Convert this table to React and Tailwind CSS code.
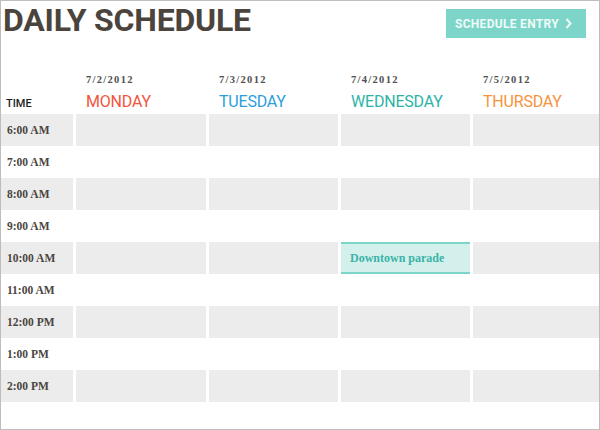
import React from 'react';

const days = [
  { date: '7/2/2012', name: 'MONDAY', color: 'text-[#f2553d]' },
  { date: '7/3/2012', name: 'TUESDAY', color: 'text-[#2b9edb]' },
  { date: '7/4/2012', name: 'WEDNESDAY', color: 'text-[#2db3a6]' },
  { date: '7/5/2012', name: 'THURSDAY', color: 'text-[#f7933c]' },
];

const times = ['6:00 AM', '7:00 AM', '8:00 AM', '9:00 AM', '10:00 AM', '11:00 AM', '12:00 PM', '1:00 PM', '2:00 PM'];

const serif = "font-['Liberation_Serif',serif]";
const sans = "font-['Roboto',sans-serif]";

const App = () => {
  return (
    <div className="w-[600px] h-[430px] border border-[#bdbdbd] bg-white overflow-hidden">
      {/* Title bar */}
      <div className="flex justify-between items-start h-[61px]">
        <h1 className={`${sans} font-bold text-[32px] leading-none tracking-[-0.2px] text-[#4b443c] pl-[2px] pt-[3px]`}>
          DAILY SCHEDULE
        </h1>
        <button className={`${sans} mt-[8px] mr-[13px] w-[140px] h-[29px] bg-[#7dd5ca] flex items-center pl-[9px] pr-[14px]`}>
          <span className="text-[12px] font-bold tracking-[0.3px] text-[#effaf8] whitespace-nowrap">SCHEDULE ENTRY</span>
          <svg className="ml-auto shrink-0" width="7" height="11" viewBox="0 0 7 11" fill="none">
            <path d="M1.5 1 L5.5 5.5 L1.5 10" stroke="#effaf8" strokeWidth="2" />
          </svg>
        </button>
      </div>

      {/* Column headings */}
      <div className="grid grid-cols-[72px_130px_129px_129px_1fr] gap-x-[3px] h-[52px]">
        <div className={`${sans} self-end pl-[5px] pb-[5px] text-[11px] leading-none text-[#1d1d1d] font-medium`}>TIME</div>
        {days.map((d) => (
          <div key={d.name} className="pl-[10px] pt-[13px]">
            <div className={`${serif} font-bold text-[10.5px] leading-[10px] tracking-[1.3px] text-[#505050]`}>{d.date}</div>
            <div className={`${sans} text-[16px] leading-none tracking-[-0.2px] mt-[9px] ${d.color}`}>{d.name}</div>
          </div>
        ))}
      </div>

      {/* Time rows */}
      <div>
        {times.map((t, i) => {
          const shaded = i % 2 === 0;
          const cell = shaded ? 'bg-[#ececec]' : 'bg-white';
          return (
            <div key={t} className="grid grid-cols-[72px_130px_129px_129px_1fr] gap-x-[3px] h-[32px]">
              <div className={`${cell} ${serif} font-bold text-[11.5px] text-[#4a4540] flex items-center pl-[6px] pt-[1px]`}>{t}</div>
              {days.map((d, j) =>
                t === '10:00 AM' && j === 2 ? (
                  <div key={d.name} className={`bg-[#d3f0ec] border-y-2 border-[#7dd5ca] flex items-center pl-[9px] ${serif} font-bold text-[12px] text-[#3bb3a7]`}>
                    Downtown parade
                  </div>
                ) : (
                  <div key={d.name} className={cell} />
                )
              )}
            </div>
          );
        })}
      </div>
    </div>
  );
};

export default App;
